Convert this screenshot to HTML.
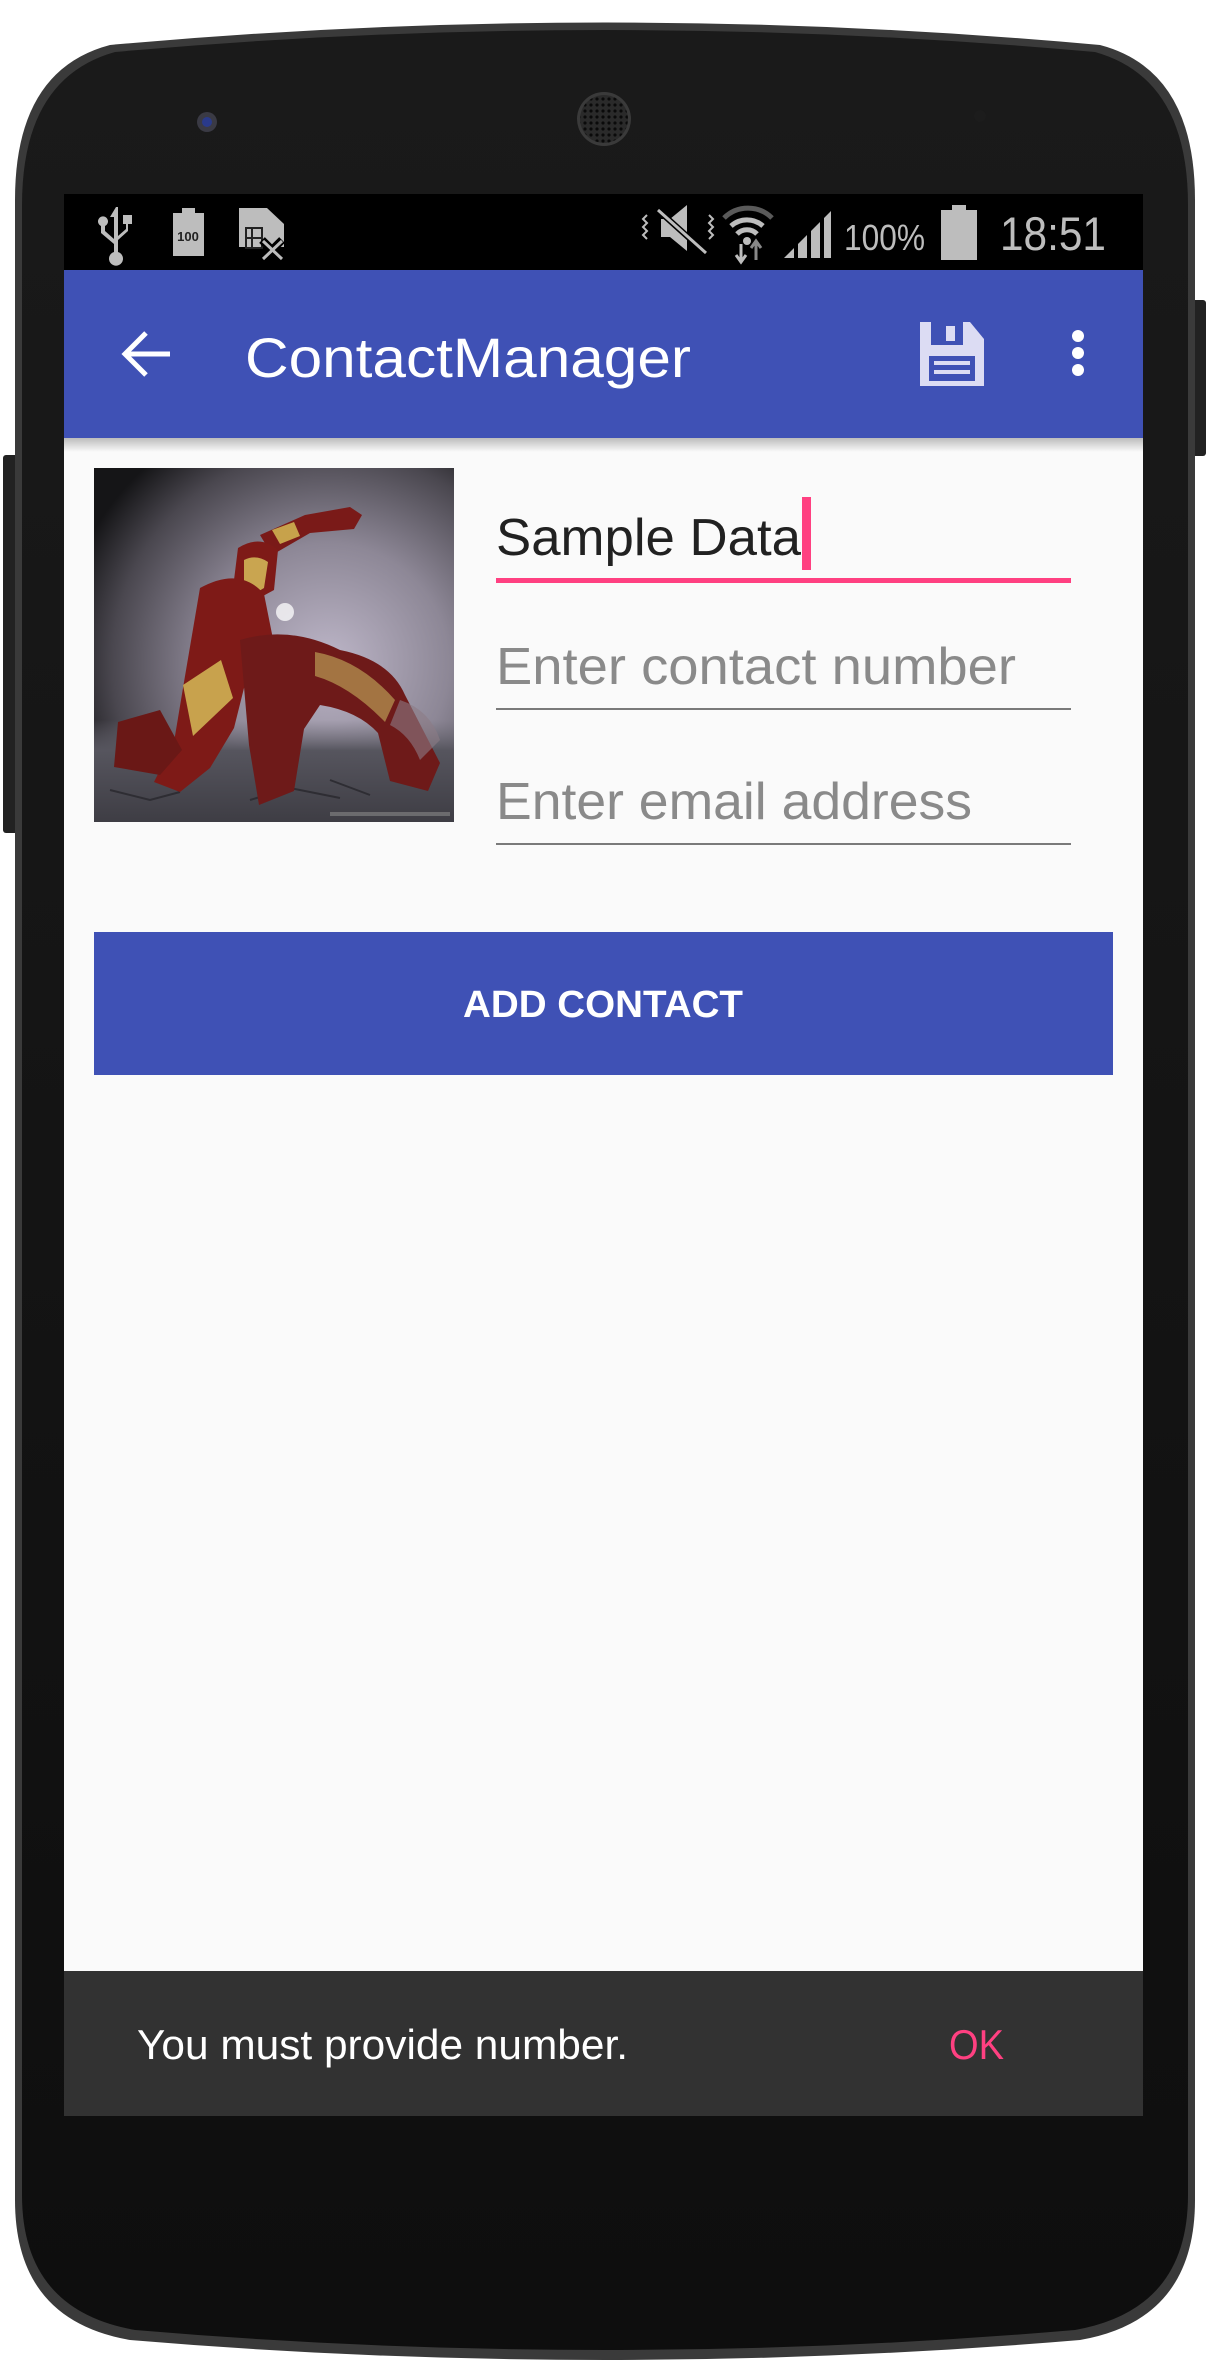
<!DOCTYPE html>
<html><head><meta charset="utf-8"><style>
html,body{margin:0;padding:0;background:#fff;width:1210px;height:2375px;overflow:hidden}
svg{display:block}
text{font-family:"Liberation Sans",sans-serif}
</style></head><body>
<svg width="1210" height="2375" viewBox="0 0 1210 2375" xmlns="http://www.w3.org/2000/svg">
<defs>
<linearGradient id="body" x1="0" y1="0" x2="0" y2="1">
<stop offset="0" stop-color="#1a1a1a"/><stop offset="1" stop-color="#0e0e0e"/></linearGradient>
<linearGradient id="shadow" x1="0" y1="0" x2="0" y2="1">
<stop offset="0" stop-color="#000" stop-opacity="0.25"/><stop offset="1" stop-color="#000" stop-opacity="0"/></linearGradient>
<radialGradient id="fog" cx="0.65" cy="0.55" r="0.75">
<stop offset="0" stop-color="#bdb6c8"/><stop offset="0.45" stop-color="#8d8796"/><stop offset="0.8" stop-color="#4a474f"/><stop offset="1" stop-color="#151517"/></radialGradient>
<linearGradient id="ground" x1="0" y1="0" x2="0" y2="1">
<stop offset="0" stop-color="#6f6d78" stop-opacity="0"/><stop offset="0.3" stop-color="#56555e"/><stop offset="1" stop-color="#3e3d44"/></linearGradient>
<pattern id="grill" width="6" height="6" patternUnits="userSpaceOnUse"><rect width="6" height="6" fill="#2a2a2a"/><circle cx="3" cy="3" r="1.6" fill="#0a0a0a"/></pattern>
<clipPath id="img"><rect x="94" y="468" width="360" height="354"/></clipPath>
</defs>
<rect x="1190" y="300" width="16" height="156" rx="3" fill="#222"/>
<rect x="3" y="455" width="16" height="378" rx="3" fill="#222"/>
<path d="M15 200 Q15 70 110 45 Q605 0 1100 45 Q1195 70 1195 200 L1195 2200 Q1195 2320 1080 2340 Q605 2380 130 2340 Q15 2320 15 2200 Z" fill="#3a3a3a"/>
<path d="M22 205 Q22 78 115 52 Q605 8 1095 52 Q1188 78 1188 205 L1188 2195 Q1188 2310 1075 2330 Q605 2370 135 2330 Q22 2310 22 2195 Z" fill="url(#body)"/>
<circle cx="207" cy="122" r="10" fill="#3a3a44"/><circle cx="207" cy="122" r="5" fill="#2a3a8a"/>
<circle cx="604" cy="119" r="27" fill="#3a3a3a"/><circle cx="604" cy="119" r="24" fill="url(#grill)"/>
<circle cx="980" cy="116" r="6" fill="#1c1c1c"/>
<rect x="64" y="194" width="1079" height="1922" fill="#fafafa"/>
<rect x="64" y="194" width="1079" height="76" fill="#000"/>
<g fill="#bdbdbd">
<path d="M116 207 l-6 10 h4 v22 l-9 -8 v-5 a5 5 0 1 0 -4 0 v7 l13 11 v8 a7 7 0 1 0 4 0 v-12 l10 -9 v-7 h4 v-9 h-9 v9 h3 v5 l-8 7 v-29 h4 z"/>
<rect x="173" y="213" width="31" height="43"/><rect x="182" y="208" width="13" height="6"/>
<path d="M239 208 h28 l17 16 v23 h-45 z"/>
</g>
<text x="188" y="241" font-size="13" font-weight="bold" text-anchor="middle" fill="#222">100</text>
<g stroke="#222" stroke-width="2" fill="none"><rect x="246" y="228" width="16" height="20"/><line x1="252" y1="228" x2="252" y2="248"/><line x1="246" y1="238" x2="262" y2="238"/></g>
<path d="M262 240 l20 20 M282 240 l-20 20" stroke="#000" stroke-width="8"/>
<path d="M263 241 l19 18 M282 241 l-19 18" stroke="#bdbdbd" stroke-width="3"/>
<g fill="#bdbdbd">
<path d="M661 219 h9 l17 -14 v46 l-17 -14 h-9 z"/>
<path d="M784 258 l10 -10 v10 z M798 258 v-14 l9 -9 v23 z M811 258 v-27 l9 -9 v36 z M824 258 v-40 l7 -7 v47 z"/>
<rect x="941" y="210" width="36" height="50"/><rect x="952" y="205" width="14" height="6"/>
</g>
<path d="M658 210 l50 45" stroke="#000" stroke-width="6"/><path d="M658 210 l48 43" stroke="#bdbdbd" stroke-width="3"/>
<path d="M647 215 l-4 4 4 4 -4 4 4 4 -4 4 4 4 M709 215 l4 4 -4 4 4 4 -4 4 4 4 -4 4" stroke="#bdbdbd" stroke-width="2" fill="none"/>
<path d="M724 218 a34 34 0 0 1 48 0" stroke="#5a5a5a" stroke-width="5" fill="none"/>
<path d="M731 226 a24 24 0 0 1 32 0 M737 234 a14 14 0 0 1 20 0" stroke="#bdbdbd" stroke-width="5" fill="none"/>
<circle cx="747" cy="241" r="4" fill="#bdbdbd"/>
<path d="M741 244 v17 M736 255 l5 7 5 -7" stroke="#bdbdbd" stroke-width="3" fill="none"/>
<path d="M756 260 v-18 M751 248 l5 -7 5 7" stroke="#888" stroke-width="3" fill="none"/>
<text x="844" y="250" font-size="36" fill="#bdbdbd" textLength="81" lengthAdjust="spacingAndGlyphs">100%</text>
<text x="1000" y="250" font-size="47" fill="#bdbdbd" textLength="106" lengthAdjust="spacingAndGlyphs">18:51</text>
<rect x="64" y="438" width="1079" height="14" fill="url(#shadow)"/>
<rect x="64" y="270" width="1079" height="168" fill="#3f51b5"/>
<path d="M170 354 h-44 M146 333 l-21 21 21 21" stroke="#fff" stroke-width="5" fill="none"/>
<text x="245" y="377" font-size="56" fill="#fff" textLength="446" lengthAdjust="spacingAndGlyphs">ContactManager</text>
<path d="M920 322 h50 l14 17 v47 h-64 z" fill="#dcdcf3"/>
<rect x="931" y="322" width="32" height="23" fill="#3f51b5"/><rect x="946" y="326" width="9" height="15" fill="#dcdcf3"/>
<rect x="929" y="356" width="46" height="25" fill="#3f51b5"/>
<rect x="934" y="361" width="36" height="4" fill="#dcdcf3"/><rect x="934" y="370" width="36" height="4" fill="#dcdcf3"/>
<circle cx="1078" cy="336" r="6" fill="#fff"/><circle cx="1078" cy="353" r="6" fill="#fff"/><circle cx="1078" cy="370" r="6" fill="#fff"/>
<g clip-path="url(#img)">
<rect x="94" y="468" width="360" height="354" fill="url(#fog)"/>
<rect x="94" y="720" width="360" height="102" fill="url(#ground)"/>
<path d="M110 790 l40 10 30 -8 M250 800 l40 -12 50 10 M330 780 l40 15" stroke="#2e2d33" stroke-width="2" fill="none"/>
<path d="M260 535 l45 -20 l45 -8 l12 8 l-8 14 l-44 4 l-38 22 z" fill="#7a1a18"/>
<path d="M272 530 l22 -8 l6 14 l-20 8 z" fill="#c7a24b"/>
<path d="M238 548 q22 -14 40 2 l-4 40 l-22 12 l-18 -22 z" fill="#7e1a17"/>
<path d="M244 560 q12 -6 24 2 l-4 26 l-10 6 l-10 -12 z" fill="#c9a550"/>
<path d="M200 588 q40 -22 64 6 l10 50 q-6 30 -30 44 l-10 40 l-24 40 l-30 24 l-26 -10 l20 -40 l10 -60 z" fill="#7e1a17"/>
<path d="M183 685 l38 -25 l12 38 l-40 38 z" fill="#c8a24d"/>
<path d="M240 640 q50 -15 100 10 q50 10 65 45 l35 68 l-12 28 l-38 -10 l-12 -48 q-20 -22 -58 -28 l-16 24 l-10 62 l-35 14 l-10 -60 z" fill="#6e1a19"/>
<path d="M315 652 q45 8 80 48 l-10 22 q-35 -36 -70 -46 z" fill="#b59350" opacity="0.75"/>
<path d="M118 722 l42 -12 l22 40 l-22 25 l-46 -8 z" fill="#6a1816"/>
<path d="M400 700 q30 10 40 40 l-20 20 q-10 -25 -30 -35 z" fill="#8c7c86" opacity="0.6"/>
<circle cx="285" cy="612" r="9" fill="#fff" opacity="0.75"/>
<rect x="330" y="812" width="120" height="4" fill="#888" opacity="0.6"/>
</g>
<text x="496" y="555" font-size="52" fill="#212121" textLength="305" lengthAdjust="spacingAndGlyphs">Sample Data</text>
<rect x="802" y="497" width="9" height="73" fill="#ff4081"/>
<rect x="496" y="578" width="575" height="5" fill="#ff4081"/>
<text x="496" y="684" font-size="52" fill="#8a8a8a" textLength="520" lengthAdjust="spacingAndGlyphs">Enter contact number</text>
<rect x="496" y="708" width="575" height="2" fill="#7a7a7a"/>
<text x="496" y="819" font-size="52" fill="#8a8a8a" textLength="476" lengthAdjust="spacingAndGlyphs">Enter email address</text>
<rect x="496" y="843" width="575" height="2" fill="#7a7a7a"/>
<rect x="94" y="932" width="1019" height="143" fill="#3f51b5"/>
<text x="463" y="1017" font-size="38" font-weight="bold" fill="#fff" textLength="280" lengthAdjust="spacingAndGlyphs">ADD CONTACT</text>
<rect x="64" y="1971" width="1079" height="145" fill="#323232"/>
<text x="137" y="2059" font-size="42" fill="#fff" textLength="491" lengthAdjust="spacingAndGlyphs">You must provide number.</text>
<text x="949" y="2059" font-size="42" fill="#ff4081" textLength="55" lengthAdjust="spacingAndGlyphs">OK</text>
</svg>
</body></html>
